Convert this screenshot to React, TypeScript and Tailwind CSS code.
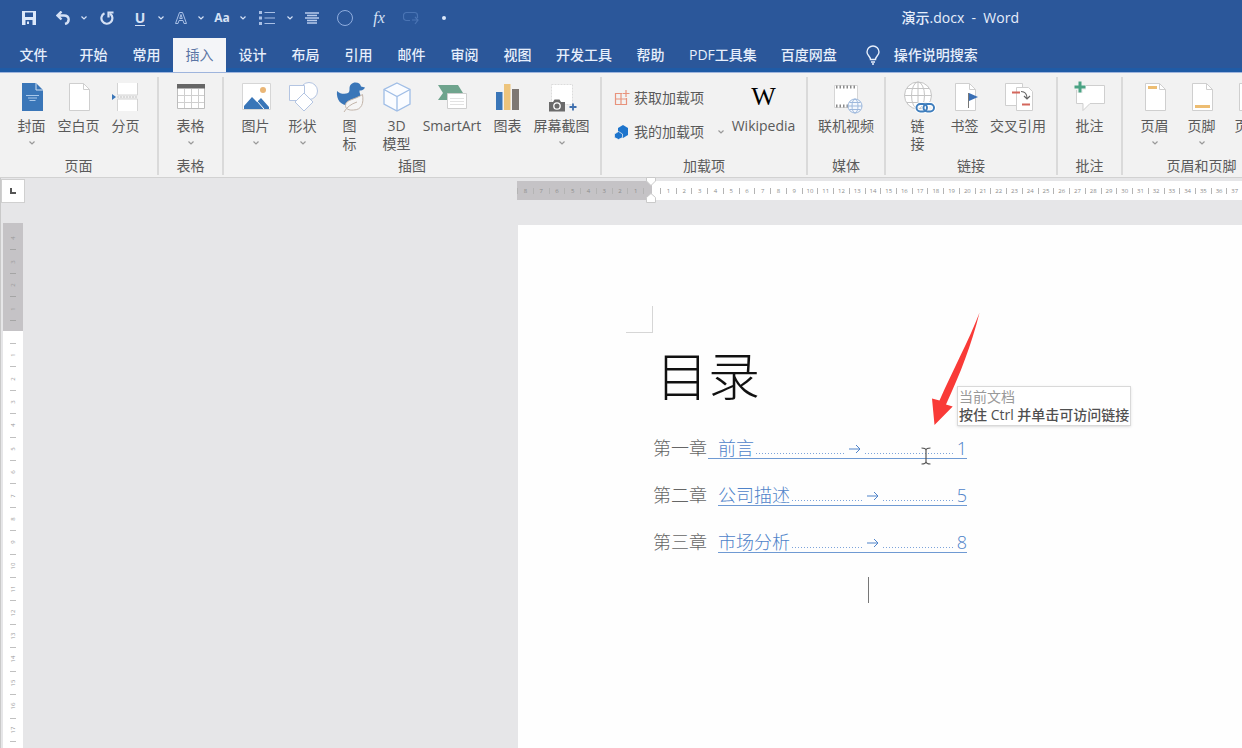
import type { ReactNode } from "react"
import { clsx } from "clsx"

const DOC = "M6.5 2.5h14l6 6v21h-20z"
const FOLD = "M20.5 2.5v6h6"

function Icon({ children }: { children: ReactNode }) {
  return (
    <svg viewBox="0 0 32 32" className="size-8 shrink-0 overflow-visible" fill="none" aria-hidden="true">
      {children}
    </svg>
  )
}

function Sheet({ children }: { children?: ReactNode }) {
  return (
    <Icon>
      <path d={DOC} fill="#fff" stroke="#cfcfcf" />
      <path d={FOLD} stroke="#cfcfcf" />
      {children}
    </Icon>
  )
}

const icons = {
  cover: (
    <Icon>
      <path d="M6 2h14l7 7v21H6z" fill="#3a76b8" />
      <path d="M20 2v7h7" stroke="#cfe0f3" />
      <path d="M10 14.500h13M12 17h9M13.500 19.500h6" stroke="#a9c8ea" />
    </Icon>
  ),
  blank: <Sheet />,
  pageBreak: (
    <Icon>
      <path d="M7.500 2v12h20V2M7.500 30V18h20v12" fill="#fff" stroke="#d4d4d4" />
      <path d="M7 16h21" stroke="#c4c4c4" strokeDasharray="2 1" />
      <path d="M2 13l4 3-4 3z" fill="#3a76b8" />
    </Icon>
  ),
  table: (
    <Icon>
      <path d="M2.500 3.500h27v24h-27z" fill="#fff" stroke="#bdbdbd" />
      <path d="M2 3h28v4.500H2z" fill="#666" />
      <path d="M3 14.500h26M3 21.500h26M9.500 8v19M16.500 8v19M23.500 8v19" stroke="#cfcfcf" />
    </Icon>
  ),
  picture: (
    <Icon>
      <path d="M2.500 2.500h28v26h-28z" fill="#fff" stroke="#d6d6d6" />
      <circle cx="23" cy="9" r="3" fill="#eab676" />
      <path d="M4 28v-3l8-9 5 5 4-4 8 9v2z" fill="#3a76b8" />
      <path d="M17 20l7 8" stroke="#fff" />
    </Icon>
  ),
  shapes: (
    <Icon>
      <circle cx="22" cy="10" r="8.500" fill="#fff" stroke="#b4c5e2" />
      <path d="M2.500 4.500h15v15h-15z" fill="#fff" stroke="#b4c5e2" />
      <path d="M17 12l9 9-9 9-9-9z" fill="#fff" stroke="#b4c5e2" />
    </Icon>
  ),
  duck: (
    <Icon>
      <path
        d="M3 10c3 3 8 3.500 11 2 1.500-1 1.500-2.500 1.500-4.500 0-3.500 2.500-6 6-6 3 0 5 1.500 5.500 4l4 1c-1 2.500-3.500 3-5.500 3-.5 3 2 5 1.500 8-1 5-6 7-12 7C7 24.500 2 19 3 10z"
        fill="#3a76b8"
      />
      <path d="M28.500 13.500c1.500 9-1 15.500-9 15.500-4.500.5-8-1-8-4.500 0-6 9-5.500 17-11z" fill="#f6f6f6" stroke="#c3b5aa" />
      <path d="M10 31c3-5 7-8 13-10" stroke="#c3b5aa" />
    </Icon>
  ),
  cube: (
    <Icon>
      <path d="M16 2l13 6.500v14.500l-13 7-13-7V8.500z" fill="#fafcff" stroke="#9fbde6" strokeWidth="1.300" />
      <path d="M3 8.500l13 7 13-7M16 15.500V30" stroke="#9fbde6" strokeWidth="1.300" />
    </Icon>
  ),
  smartArt: (
    <Icon>
      <path d="M2 4h20l5 8-5 7H2l5-7z" fill="#6fa48d" />
      <path d="M11.500 12.500h19v15h-19z" fill="#fff" stroke="#cfcfcf" />
      <path d="M14 17.500h14M14 20.500h14M14 23.500h14" stroke="#e2e2e2" />
    </Icon>
  ),
  chart: (
    <Icon>
      <path d="M4 11h6.500v18H4z" fill="#3a76b8" />
      <path d="M12 3h6.500v26H12z" fill="#edc47c" />
      <path d="M20 8h7v21h-7z" fill="#7d7773" />
    </Icon>
  ),
  screenshot: (
    <Icon>
      <path d="M5.500 3.500h21v20h-21z" fill="#fff" stroke="#dcdcdc" strokeDasharray="2 1" />
      <path d="M3 21h4l1.500-2.500h5L15 21h4v9.500H3z" fill="#6b6b6b" />
      <circle cx="11" cy="25" r="3.200" fill="#6b6b6b" stroke="#fff" strokeWidth="1.300" />
      <path d="M27 22.500v7M23.500 26h7" stroke="#3f6fae" strokeWidth="1.800" />
    </Icon>
  ),
  video: (
    <Icon>
      <path d="M4.500 4.500h23v22h-23z" fill="#fff" stroke="#d6d6d6" />
      <path d="M6 6h21M6 25h21" stroke="#8a8a8a" strokeWidth="3" strokeDasharray="1.500 2" />
      <circle cx="25" cy="25" r="7" fill="#f4f8fd" stroke="#9db8dc" />
      <ellipse cx="25" cy="25" rx="3" ry="7" stroke="#9db8dc" />
      <path d="M18 25h14M19.500 21.500h11M19.500 28.500h11" stroke="#9db8dc" />
    </Icon>
  ),
  link: (
    <Icon>
      <circle cx="16" cy="14.500" r="13.500" fill="#fff" stroke="#c4c4c4" />
      <ellipse cx="16" cy="14.500" rx="6.500" ry="13.500" stroke="#c4c4c4" />
      <path d="M16 1v27M2.500 14.500h27M5 7.500h22M5 21.500h22" stroke="#c4c4c4" />
      <rect x="14.500" y="23" width="10.500" height="7.500" rx="3.750" stroke="#fff" strokeWidth="4" />
      <rect x="21.500" y="23" width="10.500" height="7.500" rx="3.750" stroke="#fff" strokeWidth="4" />
      <rect x="14.500" y="23" width="10.500" height="7.500" rx="3.750" stroke="#3f7ebd" strokeWidth="2" />
      <rect x="21.500" y="23" width="10.500" height="7.500" rx="3.750" stroke="#3f7ebd" strokeWidth="2" />
    </Icon>
  ),
  bookmark: (
    <Sheet>
      <path d="M19.500 12v15" stroke="#777" />
      <path d="M20 12l9 4-9 4z" fill="#3a6fb5" />
    </Sheet>
  ),
  crossRef: (
    <Icon>
      <path d="M3.500 2.500h17v22h-17z" fill="#fff" stroke="#cfcfcf" />
      <path d="M14.500 6.500h12l4 4v19h-16z" fill="#fff" stroke="#cfcfcf" />
      <path d="M10 11.500h8M20 23.500h8" stroke="#d4675c" strokeWidth="2" />
      <path d="M19 10.500c4 0 6 2 6 7M22 15l3 3 3-3" stroke="#666" strokeWidth="1.200" />
    </Icon>
  ),
  comment: (
    <Icon>
      <path d="M2.500 4.500h28v18H16l-7 7v-7H2.500z" fill="#fff" stroke="#cfcfcf" />
      <path d="M6 0v12M0 6h12" stroke="#f2f2f2" strokeWidth="6" />
      <path d="M6 .5v11M.5 6h11" stroke="#4ba384" strokeWidth="3" />
    </Icon>
  ),
  header: (
    <Sheet>
      <path d="M9 6.500h9" stroke="#edbd72" strokeWidth="3" />
    </Sheet>
  ),
  footer: (
    <Sheet>
      <path d="M9 25.500h15" stroke="#edbd72" strokeWidth="3" />
    </Sheet>
  ),
}

function Chevron({ className }: { className?: string }) {
  return (
    <svg viewBox="0 0 6 4" className={clsx("h-1 w-1.5", className)} fill="none" stroke="currentColor" aria-hidden="true">
      <path d="M.5.5L3 3 5.500.5" strokeWidth="1.200" />
    </svg>
  )
}

function RibbonButton({
  icon,
  label,
  menu,
  width = "w-[47px]",
}: {
  icon: ReactNode
  label: string[]
  menu?: boolean
  width?: string
}) {
  return (
    <button type="button" className={clsx("flex shrink-0 flex-col items-center", width)}>
      {icon}
      <span className="mt-1 flex flex-col whitespace-nowrap">
        {label.map((line) => (
          <span key={line}>{line}</span>
        ))}
      </span>
      {menu && <Chevron className="mt-1.5 text-[#999]" />}
    </button>
  )
}

function Group({ title, children }: { title: string; children: ReactNode }) {
  return (
    <section
      aria-label={title}
      className="mt-1 flex h-[98px] shrink-0 flex-col justify-between border-r-2 border-[#dadada] px-2 pt-1"
    >
      <div className="flex justify-center">{children}</div>
      <h2 className="text-center">{title}</h2>
    </section>
  )
}

function QuickButton({ label, width, children }: { label: string; width: string; children: ReactNode }) {
  return (
    <button type="button" aria-label={label} className={clsx("flex h-full items-center justify-center", width)}>
      {children}
    </button>
  )
}

function QuickAccess() {
  return (
    <div className="flex h-full items-center pl-3 text-[#d5e1f5]">
      <QuickButton label="保存" width="w-[34px]">
        <svg viewBox="0 0 14 14" className="size-3.5" aria-hidden="true">
          <path d="M0 0h14v14H0z" fill="#dce8fa" />
          <path d="M3 1.500h8V6H3zM3.500 9h7v5h-7z" fill="#2b579a" />
          <path d="M5 10.500h2V13H5z" fill="#dce8fa" />
        </svg>
      </QuickButton>
      <QuickButton label="撤消" width="w-[34px]">
        <svg viewBox="0 0 14 14" className="size-3.5" fill="none" stroke="currentColor" strokeWidth="2.400" aria-hidden="true">
          <path d="M5.500.5L1.500 4.500l4 4M2 4.500h6c6 0 6 7 1 8.500" />
        </svg>
      </QuickButton>
      <QuickButton label="撤消选项" width="w-2">
        <Chevron />
      </QuickButton>
      <QuickButton label="重复" width="w-[38px]">
        <svg viewBox="0 0 14 14" className="size-3.5" fill="none" stroke="currentColor" strokeWidth="2.200" aria-hidden="true">
          <path d="M4.500 2.300a5.500 5.500 0 1 0 5.500.4" />
          <path d="M8.500 6.500V1.500h5" />
        </svg>
      </QuickButton>
      <QuickButton label="下划线" width="w-7">
        <span className="border-b border-current text-sm leading-3.5 font-bold">U</span>
      </QuickButton>
      <QuickButton label="下划线选项" width="w-3.5">
        <Chevron />
      </QuickButton>
      <QuickButton label="文本效果" width="w-[26px]">
        <svg viewBox="0 0 12 12" className="size-3" fill="none" stroke="#a9c0e6" aria-hidden="true">
          <path d="M.5 11.500L4.500.5h3l4 11H9l-1-3H4l-1 3zM4.700 6.500h2.600L6 2.500z" />
        </svg>
      </QuickButton>
      <QuickButton label="文本效果选项" width="w-3.5">
        <Chevron />
      </QuickButton>
      <QuickButton label="更改大小写" width="w-7">
        <span className="text-xs font-bold">Aa</span>
      </QuickButton>
      <QuickButton label="大小写选项" width="w-3.5">
        <Chevron />
      </QuickButton>
      <QuickButton label="项目符号" width="w-[34px]">
        <svg viewBox="0 0 16 14" className="h-3.5 w-4" stroke="#a9c0e6" aria-hidden="true">
          <path d="M0 1.500h3M0 7h3M0 12.500h3" strokeWidth="3" />
          <path d="M5.500 1.500H16M5.500 7H16M5.500 12.500H16" />
        </svg>
      </QuickButton>
      <QuickButton label="项目符号选项" width="w-3">
        <Chevron />
      </QuickButton>
      <QuickButton label="居中" width="w-8">
        <svg viewBox="0 0 14 12" className="h-3 w-3.5" stroke="#b9ccec" strokeWidth="1.400" aria-hidden="true">
          <path d="M0 1h14M2 3.500h10M0 6h14M2 8.500h10M2 11h10" />
        </svg>
      </QuickButton>
      <QuickButton label="形状" width="w-[34px]">
        <span className="size-4 rounded-full border border-[#8fadde]" />
      </QuickButton>
      <QuickButton label="公式" width="w-[34px]">
        <span className="font-['Liberation_Serif',serif] text-base italic">fx</span>
      </QuickButton>
      <QuickButton label="选择对象" width="w-[30px]">
        <svg viewBox="0 0 16 14" className="h-3.5 w-4" fill="none" stroke="#4a74b4" strokeWidth="1.200" aria-hidden="true">
          <path d="M7 9.500H3.500a3 3 0 0 1-3-3V4.500a3 3 0 0 1 3-3h8a3 3 0 0 1 3 3V7M9 9h6M12 6l3 3-3 4" />
        </svg>
      </QuickButton>
      <QuickButton label="自定义快速访问工具栏" width="w-9">
        <span className="size-1 rounded-full bg-[#dce8fa]" />
      </QuickButton>
    </div>
  )
}

const tabs = [
  "开始",
  "常用",
  "插入",
  "设计",
  "布局",
  "引用",
  "邮件",
  "审阅",
  "视图",
  "开发工具",
  "帮助",
  "PDF工具集",
  "百度网盘",
]

function Tabs() {
  return (
    <nav className="flex h-[34px] border-b-4 border-[#1f5ba6] text-sm font-medium whitespace-nowrap text-[#e6eefb]">
      <button type="button" className="-mb-1 w-[67px] shrink-0">
        文件
      </button>
      {tabs.map((tab) => (
        <button
          key={tab}
          type="button"
          className={clsx(
            "-mb-1 min-w-[53px] shrink-0 px-3",
            tab === "插入" && "bg-[#f4f5f8] font-normal text-[#5c75a5]",
          )}
        >
          {tab}
        </button>
      ))}
      <button type="button" className="-mb-1 ml-[17px] flex shrink-0 items-center gap-3.5">
        <svg viewBox="0 0 14 20" className="h-5 w-3.5" fill="none" stroke="currentColor" strokeWidth="1.400" aria-hidden="true">
          <path d="M4.500 14.500C4.500 11.500 1 10.500 1 7a6 6 0 0 1 12 0c0 3.500-3.500 4.500-3.500 7.500zM5 17h4M6 19h2" />
        </svg>
        操作说明搜索
      </button>
    </nav>
  )
}

function Ribbon() {
  return (
    <div className="flex h-[106px] overflow-hidden border-t border-b border-t-[#9fb5dd] border-b-[#d2d2d2] bg-[#f2f2f2] text-sm leading-[18px] text-[#5a5a5a]">
      <Group title="页面">
        <RibbonButton icon={icons.cover} label={["封面"]} menu />
        <RibbonButton icon={icons.blank} label={["空白页"]} />
        <RibbonButton icon={icons.pageBreak} label={["分页"]} />
      </Group>
      <Group title="表格">
        <RibbonButton icon={icons.table} label={["表格"]} menu />
      </Group>
      <Group title="插图">
        <RibbonButton icon={icons.picture} label={["图片"]} menu />
        <RibbonButton icon={icons.shapes} label={["形状"]} menu />
        <RibbonButton icon={icons.duck} label={["图", "标"]} />
        <RibbonButton icon={icons.cube} label={["3D", "模型"]} />
        <RibbonButton icon={icons.smartArt} label={["SmartArt"]} width="w-16" />
        <RibbonButton icon={icons.chart} label={["图表"]} />
        <RibbonButton icon={icons.screenshot} label={["屏幕截图"]} menu width="w-[61px]" />
      </Group>
      <Group title="加载项">
        <div className="flex w-[119px] flex-col gap-4 pt-2 pl-1">
          <button type="button" className="flex items-center gap-1 whitespace-nowrap">
            <svg viewBox="0 0 16 16" className="size-4" fill="none" stroke="#e8937c" strokeWidth="1.200" aria-hidden="true">
              <path d="M8 3.500H1.500v11h11V8M1.500 9h11M7 3.500v11M12 0v7M8.500 3.500h7" />
            </svg>
            获取加载项
          </button>
          <button type="button" className="flex items-center gap-1 whitespace-nowrap">
            <svg viewBox="0 0 16 16" className="size-4" aria-hidden="true">
              <path d="M9 1l5 3v7l-5 3-5-3V4z" fill="#1d74cc" />
              <path d="M4.500 7.500L8.500 10v3.500L4.500 15.500.5 13.500V10z" fill="#1d74cc" stroke="#f2f2f2" strokeWidth=".7" />
            </svg>
            我的加载项
            <Chevron className="ml-2.5 text-[#999]" />
          </button>
        </div>
        <RibbonButton
          icon={
            <span className="flex h-8 items-center font-['Liberation_Serif',serif] text-[26px] text-black">W</span>
          }
          label={["Wikipedia"]}
          width="w-[69px]"
        />
      </Group>
      <Group title="媒体">
        <RibbonButton icon={icons.video} label={["联机视频"]} width="w-[60px]" />
      </Group>
      <Group title="链接">
        <RibbonButton icon={icons.link} label={["链", "接"]} />
        <RibbonButton icon={icons.bookmark} label={["书签"]} />
        <RibbonButton icon={icons.crossRef} label={["交叉引用"]} width="w-[60px]" />
      </Group>
      <Group title="批注">
        <RibbonButton icon={icons.comment} label={["批注"]} />
      </Group>
      <Group title="页眉和页脚">
        <RibbonButton icon={icons.header} label={["页眉"]} menu />
        <RibbonButton icon={icons.footer} label={["页脚"]} menu />
        <RibbonButton icon={icons.blank} label={["页码"]} menu />
      </Group>
    </div>
  )
}

const range = (n: number) => Array.from({ length: n }, (_, i) => i + 1)

function RulerCell({ value }: { value: number }) {
  return (
    <span className="flex min-w-0 flex-1 items-center">
      <span className="h-1.5 w-px shrink-0 bg-[#b4b4b4]" />
      <span className="flex w-full justify-center">{value}</span>
    </span>
  )
}

function HorizontalRuler() {
  return (
    <div className="mt-[3px] flex h-[19px] text-[6px] leading-none text-[#8c8c8c]">
      <div className="flex w-[135px] shrink-0 bg-[#c5c3c6] pr-2">
        {range(8)
          .reverse()
          .map((n) => (
            <RulerCell key={n} value={n} />
          ))}
        <span className="h-1.5 w-px self-center bg-[#b4b4b4]" />
      </div>
      <div className="relative flex min-w-0 flex-1 bg-white pl-2">
        {range(37).map((n) => (
          <RulerCell key={n} value={n} />
        ))}
        <svg viewBox="0 0 10 26" className="absolute -top-1 -left-1.5 h-[26px] w-2.5" fill="#fff" stroke="#cacaca" aria-hidden="true">
          <path d="M.5.5h9V4L5 8.500.5 4zM5 16.500l4.500 4v5h-9v-5z" />
        </svg>
      </div>
    </div>
  )
}

function VerticalRuler() {
  return (
    <div className="mt-5 ml-0.5 flex w-5 flex-1 flex-col text-[6px] leading-none text-[#9a9a9a]">
      <div className="flex h-[108px] shrink-0 flex-col items-center justify-between bg-[#c5c3c6] pt-3 pb-2.5">
        {[4, 3, 2, 1].map((n) => (
          <span key={n} className="flex flex-col items-center gap-2">
            <span className="-rotate-90">{n}</span>
            <span className="h-px w-1.5 bg-[#a5a5a5]" />
          </span>
        ))}
      </div>
      <div className="flex flex-1 flex-col bg-white pt-3 pb-1.5">
        {range(17).map((n) => (
          <span key={n} className="flex flex-1 flex-col items-center">
            <span className="h-px w-1.5 shrink-0 bg-[#c0c0c0]" />
            <span className="flex flex-1 items-center">
              <span className="-rotate-90">{n}</span>
            </span>
          </span>
        ))}
        <span className="h-px w-1.5 self-center bg-[#c0c0c0]" />
      </div>
    </div>
  )
}

const chapters = [
  { chapter: "第一章", title: "前言", page: 1, wide: true },
  { chapter: "第二章", title: "公司描述", page: 5, wide: false },
  { chapter: "第三章", title: "市场分析", page: 8, wide: false },
]

// dot leader between the title and the page number
function Leader() {
  return (
    <span className="mt-2.5 h-px min-w-0 flex-1 bg-[repeating-linear-gradient(90deg,#7da4da_0_1px,transparent_1px_3px)]" />
  )
}

function Contents() {
  return (
    <ol className="mt-9 ml-[135px] flex w-[314px] flex-col gap-[27px] text-lg leading-[18px] font-light">
      {chapters.map(({ chapter, title, page, wide }) => (
        <li key={page} className="flex h-5 justify-between whitespace-nowrap text-[#666]">
          <span>{chapter}</span>
          <a
            href={`#chapter-${page}`}
            className={clsx("flex border-b border-[#6f9ad3] text-[#4f83c9]", wide ? "w-[259px] pl-2.5" : "w-[249px]")}
          >
            <span>{title}</span>
            <span className="flex min-w-0 flex-1 items-center gap-1 px-0.5">
              <Leader />
              <svg viewBox="0 0 12 10" className="h-2.5 w-3 shrink-0" fill="none" stroke="currentColor" aria-hidden="true">
                <path d="M0 5h11M7 1l4 4-4 4" />
              </svg>
              <Leader />
            </span>
            <span>{page}</span>
          </a>
        </li>
      ))}
    </ol>
  )
}

function Page() {
  return (
    <main className="relative mt-[25px] ml-px flex-1 overflow-hidden bg-[#fefefe]">
      <div className="mt-[81px] ml-[108px] size-[27px] border-r border-b border-[#d6d6d6]" />
      <h1 className="mt-4 ml-[138px] text-[52px] leading-[54px] font-light text-[#111]">目录</h1>
      <Contents />
      <span className="mt-6 ml-[350px] block h-[26px] w-px bg-[#777]" />

      <div
        role="tooltip"
        className="absolute top-[161px] left-[439px] border border-[#d9d9d9] bg-white px-px py-px text-sm leading-[18px] whitespace-nowrap shadow-sm"
      >
        <p className="text-[#999]">当前文档</p>
        <p className="font-medium text-[#505050]">按住 Ctrl 并单击可访问链接</p>
      </div>
      <svg viewBox="0 0 50 114" className="absolute top-[87px] left-[413px] h-[114px] w-[50px]" aria-hidden="true">
        <path d="M48.500.8C38 28 22 58 8.500 88.500L1 86.500l2.500 26.500L21.700 94.500 15 92.500C30 60 40 34 48.500.8z" fill="#f93a37" />
      </svg>
      <svg
        viewBox="0 0 10 18"
        className="absolute top-[222px] left-[403px] h-[18px] w-2.5"
        fill="none"
        stroke="#555"
        strokeWidth="1.200"
        aria-hidden="true"
      >
        <path d="M.5 1C3 1 5 1.500 5 3.500 5 1.500 7 1 9.500 1M5 3.500v11M.5 17c2.500 0 4.500-.5 4.500-2.500 0 2 2 2.500 4.500 2.500" />
      </svg>
    </main>
  )
}

export default function App() {
  return (
    <div className="flex h-screen flex-col overflow-hidden bg-[#e6e6e8] font-['Open_Sans','Noto_Sans_CJK_SC',sans-serif]">
      <header className="shrink-0 bg-[#2b579a]">
        <div className="flex h-[38px] items-center justify-between pb-0.5">
          <QuickAccess />
          <p className="mr-[223px] text-sm font-medium whitespace-pre text-[#e6eefb]">演示.docx  -  Word</p>
        </div>
        <Tabs />
        <Ribbon />
      </header>
      <div className="flex min-h-0 flex-1">
        <div className="flex w-[26px] shrink-0 flex-col border-l border-[#c9c9c9]">
          <button type="button" aria-label="制表符" className="mt-px flex h-6 w-6 items-center justify-center border border-[#d0d0d0] bg-white">
            <span className="size-1.5 border-b-2 border-l-2 border-[#555]" />
          </button>
          <VerticalRuler />
        </div>
        <div className="ml-[491px] flex min-w-0 flex-1 flex-col">
          <HorizontalRuler />
          <Page />
        </div>
      </div>
    </div>
  )
}
